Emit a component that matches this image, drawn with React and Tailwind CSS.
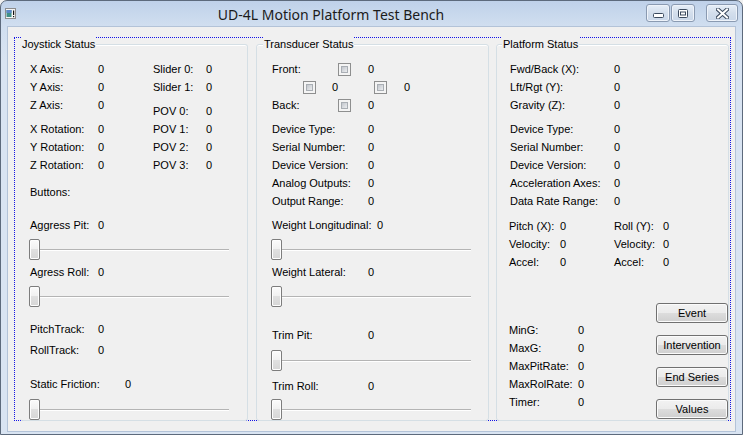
import React from 'react';

const Row = ({ label, value, w, className = '' }) => (
  <div className={`flex h-[18px] items-center whitespace-nowrap ${className}`}>
    <span className={w}>{label}</span>
    <span>{value}</span>
  </div>
);

const Slider = ({ className = '' }) => (
  <div className={`relative h-[21px] w-[200px] ${className}`}>
    <div className="absolute left-0 right-0 top-[10px] h-[2px] border-t border-b border-t-[#b4b4b4] border-b-white" />
    <div className="absolute left-0 top-0 h-[21px] w-[11px] rounded-[2px] border border-[#7d7d7d] bg-[linear-gradient(to_bottom,#fbfbfb_0%,#f1f1f1_45%,#e0e0e0_50%,#d6d6d6_100%)] shadow-[inset_0_0_0_1px_#fdfdfd]" />
  </div>
);

const Check = ({ className = '' }) => (
  <div className={`h-[13px] w-[13px] shrink-0 border border-[#8e8f8f] bg-[#f4f4f4] p-[2px] ${className}`}>
    <div className="h-full w-full border border-[#a9aeb4] bg-[linear-gradient(135deg,#c2c6cc,#ebedef)]" />
  </div>
);

const Button = ({ children, className = '' }) => (
  <button className={`flex h-[20px] w-[72px] items-center justify-center rounded-[3px] border border-[#707070] bg-[linear-gradient(to_bottom,#f2f2f2_0%,#ebebeb_50%,#dddddd_50%,#cfcfcf_100%)] shadow-[inset_0_0_0_1px_#fbfbfb] text-black ${className}`}>
    {children}
  </button>
);

const Group = ({ title, className = '', captionClass = '', children }) => (
  <div className={`mt-[7px] h-[377px] shrink-0 rounded-[3px] border border-[#d5dfe5] bg-[#f0f0f0] shadow-[inset_0_1px_0_#fff] ${className}`}>
    <div className={`-mt-[8px] w-fit bg-[#f0f0f0] px-[1px] leading-[14px] ${captionClass}`}>{title}</div>
    {children}
  </div>
);

const TitleButton = ({ children, className = '' }) => (
  <div className={`flex h-[18px] items-center justify-center rounded-[3px] border border-[#8a9ab1] bg-[linear-gradient(to_bottom,#e6eef8,#d3deec_50%,#c9d7e9)] shadow-[inset_0_0_0_1px_#eef3fa] ${className}`}>
    {children}
  </div>
);

export default function App() {
  return (
    <div className="h-[435px] w-[743px] bg-[#f0f0f0] font-['Liberation_Sans',Arial,sans-serif] text-[11px] text-black">
      <div className="flex h-[435px] w-[743px] flex-col rounded-t-[7px] border border-[#5d6a7c] bg-[linear-gradient(to_bottom,#bfd1e9_0px,#d1dff0_26px,#d9e4f2_60px)] px-[6px] pb-[2px]">
        {/* title bar */}
        <div className="-mx-[6px] flex h-[25px] shrink-0 items-start pl-[4px] pr-[4px]">
          <svg className="mt-[7px] h-[11px] w-[11px] shrink-0" viewBox="0 0 11 11">
            <rect x="0.5" y="0.5" width="10" height="10" fill="#f4f4f4" stroke="#8c8c8c" />
            <rect x="1.5" y="2" width="5" height="7" fill="#3e8f88" />
            <rect x="1.5" y="2" width="5" height="3" fill="#5b86c9" />
            <rect x="8" y="2.5" width="1.2" height="4.5" fill="#111" />
            <rect x="8" y="8" width="1.2" height="1.2" fill="#111" />
          </svg>
          <div className="flex h-[25px] flex-1 items-center justify-center pt-[2px] font-['Noto_Sans',sans-serif] text-[14px] text-[#1b1b1b]">
            UD-4L Motion Platform Test Bench
          </div>
          <div className="mt-[3px] flex shrink-0">
            <TitleButton className="w-[24px]">
              <svg width="11" height="6" viewBox="0 0 11 6" className="mt-[6px]">
                <rect x="0.5" y="0.5" width="10" height="4" rx="1" fill="#fff" stroke="#3b4a5e" />
              </svg>
            </TitleButton>
            <TitleButton className="ml-[1px] w-[24px]">
              <svg width="10" height="9" viewBox="0 0 10 9">
                <rect x="0.5" y="0.5" width="9" height="8" rx="1" fill="#fff" stroke="#3b4a5e" />
                <rect x="2.5" y="3" width="5" height="3" fill="#fff" stroke="#3b4a5e" />
              </svg>
            </TitleButton>
            <TitleButton className="ml-[11px] w-[32px]">
              <svg width="13" height="11" viewBox="0 0 13 11">
                <path d="M2 1.5 L11 9.5 M11 1.5 L2 9.5" stroke="#3b4a5e" strokeWidth="4" strokeLinecap="square" />
                <path d="M2 1.5 L11 9.5 M11 1.5 L2 9.5" stroke="#fff" strokeWidth="2" strokeLinecap="square" />
              </svg>
            </TitleButton>
          </div>
        </div>

        {/* client area */}
        <div className="flex-1 border border-[#b3c3d8] bg-[#f0f0f0]">
          <div className="ml-[6px] mt-[10px] h-[384px] w-[717px] border border-dotted border-[#1414e6]">
            <div className="-mt-px flex h-[384px]">
              {/* Joystick Status */}
              <Group title="Joystick Status" className="ml-[5px] w-[228px] border-l-0 pl-[10px]" captionClass="-ml-[9px]">
                <div className="mt-[9px] flex">
                  <div className="w-[123px]">
                    <Row label="X Axis:" value="0" w="w-[68px]" />
                    <Row label="Y Axis:" value="0" w="w-[68px]" />
                    <Row label="Z Axis:" value="0" w="w-[68px]" />
                    <Row label="X Rotation:" value="0" w="w-[68px]" className="mt-[6px]" />
                    <Row label="Y Rotation:" value="0" w="w-[68px]" />
                    <Row label="Z Rotation:" value="0" w="w-[68px]" />
                  </div>
                  <div>
                    <Row label="Slider 0:" value="0" w="w-[53px]" />
                    <Row label="Slider 1:" value="0" w="w-[53px]" />
                    <Row label="POV 0:" value="0" w="w-[53px]" className="mt-[6px]" />
                    <Row label="POV 1:" value="0" w="w-[53px]" />
                    <Row label="POV 2:" value="0" w="w-[53px]" />
                    <Row label="POV 3:" value="0" w="w-[53px]" />
                  </div>
                </div>
                <Row label="Buttons:" value="" className="mt-[9px]" />
                <Row label="Aggress Pit:" value="0" w="w-[68px]" className="mt-[15px]" />
                <Slider className="-ml-px mt-[5px]" />
                <Row label="Agress Roll:" value="0" w="w-[68px]" className="mt-[3px]" />
                <Slider className="-ml-px mt-[5px]" />
                <Row label="PitchTrack:" value="0" w="w-[68px]" className="mt-[13px]" />
                <Row label="RollTrack:" value="0" w="w-[68px]" className="mt-[3px]" />
                <Row label="Static Friction:" value="0" w="w-[95px]" className="mt-[16px]" />
                <Slider className="-ml-px mt-[6px]" />
              </Group>

              {/* Transducer Status */}
              <Group title="Transducer Status" className="ml-[8px] w-[233px] pl-[15px]" captionClass="-ml-[9px]">
                <div className="mt-[9px] flex h-[18px] items-center">
                  <span className="w-[66px]">Front:</span>
                  <Check />
                  <span className="ml-[17px]">0</span>
                </div>
                <div className="flex h-[18px] items-center">
                  <Check className="ml-[31px]" />
                  <span className="ml-[16px] w-[42px]">0</span>
                  <Check />
                  <span className="ml-[17px]">0</span>
                </div>
                <div className="flex h-[18px] items-center">
                  <span className="w-[66px]">Back:</span>
                  <Check />
                  <span className="ml-[17px]">0</span>
                </div>
                <Row label="Device Type:" value="0" w="w-[96px]" className="mt-[6px]" />
                <Row label="Serial Number:" value="0" w="w-[96px]" />
                <Row label="Device Version:" value="0" w="w-[96px]" />
                <Row label="Analog Outputs:" value="0" w="w-[96px]" />
                <Row label="Output Range:" value="0" w="w-[96px]" />
                <Row label="Weight Longitudinal:" value="0" w="w-[105px]" className="mt-[6px]" />
                <Slider className="-ml-px mt-[5px]" />
                <Row label="Weight Lateral:" value="0" w="w-[96px]" className="mt-[3px]" />
                <Slider className="-ml-px mt-[5px]" />
                <Row label="Trim Pit:" value="0" w="w-[96px]" className="mt-[19px]" />
                <Slider className="-ml-px mt-[6px]" />
                <Row label="Trim Roll:" value="0" w="w-[96px]" className="mt-[6px]" />
                <Slider className="-ml-px mt-[4px]" />
              </Group>

              {/* Platform Status */}
              <Group title="Platform Status" className="ml-[7px] w-[233px] pl-[13px]" captionClass="-ml-[8px]">
                <Row label="Fwd/Back (X):" value="0" w="w-[104px]" className="mt-[9px]" />
                <Row label="Lft/Rgt (Y):" value="0" w="w-[104px]" />
                <Row label="Gravity (Z):" value="0" w="w-[104px]" />
                <Row label="Device Type:" value="0" w="w-[104px]" className="mt-[6px]" />
                <Row label="Serial Number:" value="0" w="w-[104px]" />
                <Row label="Device Version:" value="0" w="w-[104px]" />
                <Row label="Acceleration Axes:" value="0" w="w-[104px]" />
                <Row label="Data Rate Range:" value="0" w="w-[104px]" />
                <div className="-ml-px mt-[7px] flex">
                  <div className="w-[105px]">
                    <Row label="Pitch (X):" value="0" w="w-[51px]" />
                    <Row label="Velocity:" value="0" w="w-[51px]" />
                    <Row label="Accel:" value="0" w="w-[51px]" />
                  </div>
                  <div>
                    <Row label="Roll (Y):" value="0" w="w-[49px]" />
                    <Row label="Velocity:" value="0" w="w-[49px]" />
                    <Row label="Accel:" value="0" w="w-[49px]" />
                  </div>
                </div>
                <div className="-ml-px flex">
                  <div className="mt-[50px] w-[147px]">
                    <Row label="MinG:" value="0" w="w-[69px]" />
                    <Row label="MaxG:" value="0" w="w-[69px]" />
                    <Row label="MaxPitRate:" value="0" w="w-[69px]" />
                    <Row label="MaxRolRate:" value="0" w="w-[69px]" />
                    <Row label="Timer:" value="0" w="w-[69px]" />
                  </div>
                  <div className="mt-[32px] flex flex-col gap-[12px]">
                    <Button>Event</Button>
                    <Button>Intervention</Button>
                    <Button>End Series</Button>
                    <Button>Values</Button>
                  </div>
                </div>
              </Group>
            </div>
          </div>
        </div>
      </div>
    </div>
  );
}
